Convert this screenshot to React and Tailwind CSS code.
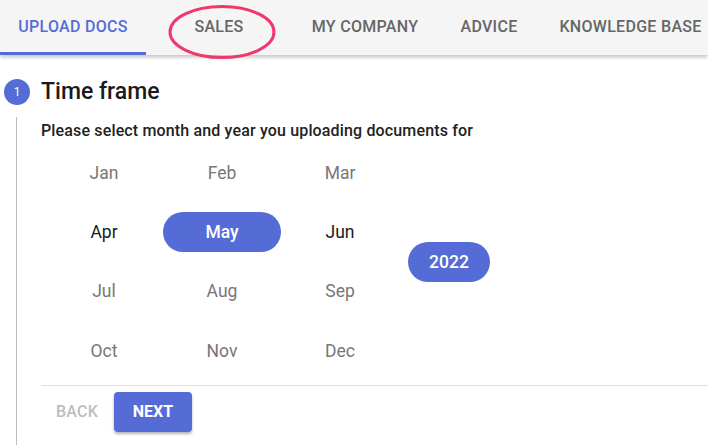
import React, { useState } from 'react';

const tabs = [
    { label: 'Upload docs', w: 'w-[146px]' },
    { label: 'Sales', w: 'w-[146px]' },
    { label: 'My company', w: 'w-[146px]' },
    { label: 'Advice', w: 'w-[102px]' },
    { label: 'Knowledge base', w: 'w-[181px]' },
];
const months = ['Jan', 'Feb', 'Mar', 'Apr', 'May', 'Jun', 'Jul', 'Aug', 'Sep', 'Oct', 'Nov', 'Dec'];
const enabled = ['Apr', 'May', 'Jun'];

export default function App() {
    const [month, setMonth] = useState('May');

    return (
        <div className="w-[708px] h-[445px] overflow-hidden bg-white font-['Roboto',sans-serif]">
            {/* Tabs */}
            <div className="relative h-[55px] bg-[#f5f5f5] shadow-[0_2px_4px_rgba(0,0,0,0.25)] flex items-stretch z-10">
                {tabs.map((t, i) => (
                    <div
                        key={t.label}
                        className={
                            'relative shrink-0 flex items-center justify-center pb-[1px] uppercase text-[16px] font-medium tracking-[0.3px] whitespace-nowrap ' +
                            t.w +
                            (i === 0 ? ' text-[#556cd6]' : ' text-[#666]')
                        }
                    >
                        {t.label}
                        {i === 0 && <div className="absolute left-0 right-0 bottom-0 h-[3px] bg-[#556cd6]" />}
                        {i === 1 && (
                            <svg className="absolute left-[22px] top-[4px]" width="108" height="56" viewBox="0 0 108 56">
                                <ellipse cx="54" cy="28" rx="52" ry="25.5" fill="none" stroke="#f0386b" strokeWidth="3" />
                            </svg>
                        )}
                    </div>
                ))}
            </div>

            {/* Step */}
            <div className="flex items-center gap-[11px] pl-[4px] mt-[24px] h-[26px]">
                <div className="w-[26px] h-[26px] rounded-full bg-[#556cd6] text-white text-[12px] flex items-center justify-center">1</div>
                <div className="text-[23px] font-medium text-[#1a1a1a] leading-[26px]">Time frame</div>
            </div>

            <div className="ml-[16px] mt-[12px] border-l border-[#bdbdbd] pl-[24px] pt-[2px] h-[400px]">
                <div className="text-[16px] leading-[24px] font-medium tracking-[0.15px] text-[#222]">
                    Please select month and year you uploading documents for
                </div>

                <div className="flex items-center">
                    <div className="ml-[4px] grid grid-cols-[repeat(3,118px)] grid-rows-[repeat(4,59.33px)]">
                        {months.map((m) => (
                            <div key={m} className="flex items-center justify-center">
                                <button
                                    onClick={() => enabled.includes(m) && setMonth(m)}
                                    className={
                                        'w-[118px] h-[40px] rounded-full text-[17.5px] ' +
                                        (month === m
                                            ? 'bg-[#556cd6] text-white font-medium'
                                            : enabled.includes(m)
                                            ? 'text-[#1a1a1a]'
                                            : 'text-[#777]')
                                    }
                                >
                                    {m}
                                </button>
                            </div>
                        ))}
                    </div>
                    <div className="ml-[9px] w-[82px] h-[40px] rounded-full bg-[#556cd6] text-white text-[17.5px] font-medium flex items-center justify-center">
                        2022
                    </div>
                </div>

                <div className="mt-[5px] border-t border-[#e0e0e0] pt-[6px] flex items-center gap-[16px]">
                    <button className="ml-[15px] text-[16px] font-medium uppercase text-[#bdbdbd] tracking-[0.2px]">Back</button>
                    <button className="w-[78px] h-[40px] rounded-[4px] bg-[#556cd6] text-white text-[16px] font-bold uppercase shadow-[0_2px_3px_rgba(0,0,0,0.3)]">
                        Next
                    </button>
                </div>
            </div>
        </div>
    );
}
